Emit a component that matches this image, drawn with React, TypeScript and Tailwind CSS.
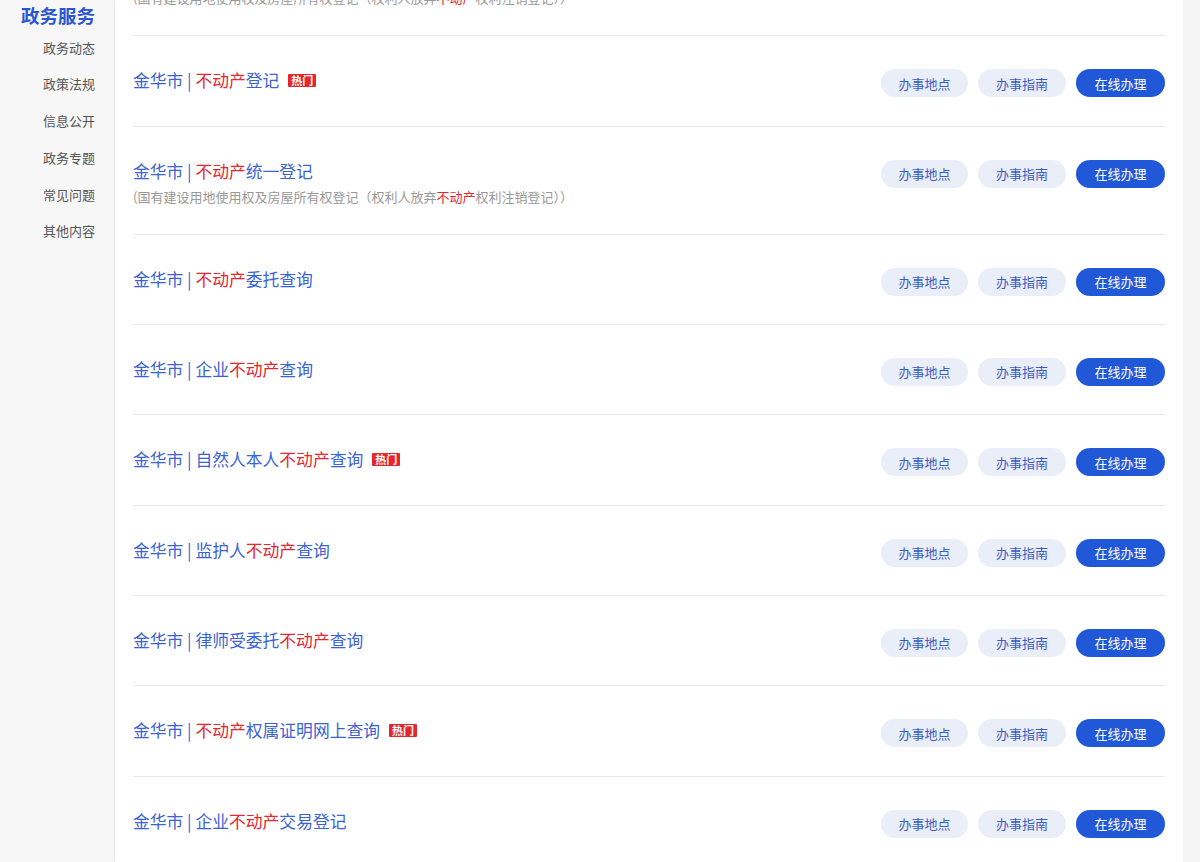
import * as React from 'react'

const font = { fontFamily: '"Noto Sans CJK SC", "Microsoft YaHei", sans-serif' }

const NAV = ['政务动态', '政策法规', '信息公开', '政务专题', '常见问题', '其他内容']

// title split into pieces: [text, isRed]
type Piece = [string, boolean]

interface Item {
  title: Piece[]
  hot?: boolean
  sub?: Piece[]
}

const SUB: Piece[] = [
  ['(国有建设用地使用权及房屋所有权登记（权利人放弃', false],
  ['不动产', true],
  ['权利注销登记））', false],
]

const ITEMS: Item[] = [
  { title: [['不动产', true], ['统一登记', false]], sub: SUB },
  { title: [['不动产', true], ['登记', false]], hot: true },
  { title: [['不动产', true], ['统一登记', false]], sub: SUB },
  { title: [['不动产', true], ['委托查询', false]] },
  { title: [['企业', false], ['不动产', true], ['查询', false]] },
  { title: [['自然人本人', false], ['不动产', true], ['查询', false]], hot: true },
  { title: [['监护人', false], ['不动产', true], ['查询', false]] },
  { title: [['律师受委托', false], ['不动产', true], ['查询', false]] },
  { title: [['不动产', true], ['权属证明网上查询', false]], hot: true },
  { title: [['企业', false], ['不动产', true], ['交易登记', false]] },
]

function Pieces({ pieces }: { pieces: Piece[] }) {
  return (
    <>
      {pieces.map(([t, red], i) => (
        <span key={i} className={red ? 'text-[#e4262f]' : ''}>
          {t}
        </span>
      ))}
    </>
  )
}

function ServiceRow({ item }: { item: Item }) {
  return (
    <div className="flex items-start justify-between border-b border-[#e8e8e8] pt-[32px] pb-[27.3px]">
      <div>
        <div className="flex items-center h-[24px] text-[16.8px] leading-[24px] text-[#3b63d3]">
          <span className="whitespace-pre">
            金华市 | <Pieces pieces={item.title} />
          </span>
          {item.hot && (
            <span className="ml-[9px] inline-flex h-[13px] items-center rounded-[1px] bg-[#e5262e] px-[3px] text-[11px] leading-[13px] font-bold text-white">
              热门
            </span>
          )}
        </div>
        {item.sub && (
          <div className="mt-[3px] text-[13px] leading-[21px] text-[#999999]">
            <Pieces pieces={item.sub} />
          </div>
        )}
      </div>
      <div className="mt-[1px] mb-[1px] flex gap-[10px] text-[13px]">
        <button className="h-[28px] w-[87px] rounded-full bg-[#e9eef9] text-[#3c5cc2]">办事地点</button>
        <button className="h-[28px] w-[88px] rounded-full bg-[#e9eef9] text-[#3c5cc2]">办事指南</button>
        <button className="h-[28px] w-[89px] rounded-full bg-[#2158d8] text-white">在线办理</button>
      </div>
    </div>
  )
}

export default function App() {
  return (
    <div className="flex h-[862px] overflow-hidden bg-[#f7f7f7]" style={font}>
      {/* Sidebar */}
      <aside className="w-[115px] shrink-0 border-r border-[#ededed] bg-[#f7f7f7] pt-[1px] pr-[19px] text-right">
        <div className="text-[18.5px] leading-[28px] font-bold text-[#2a55d3]">政务服务</div>
        <ul className="mt-[0.5px]">
          {NAV.map((n) => (
            <li key={n} className="h-[36.8px] text-[13px] leading-[36.8px] text-[#555555]">
              {n}
            </li>
          ))}
        </ul>
      </aside>

      {/* Main list */}
      <main className="w-[1068px] shrink-0 bg-white px-[18px] shadow-[0_0_4px_rgba(0,0,0,0.04)]">
        <div className="mt-[-72px]">
          {ITEMS.map((it, i) => (
            <ServiceRow key={i} item={it} />
          ))}
        </div>
      </main>

      <div className="flex-1 bg-[#f5f5f5]" />
    </div>
  )
}
